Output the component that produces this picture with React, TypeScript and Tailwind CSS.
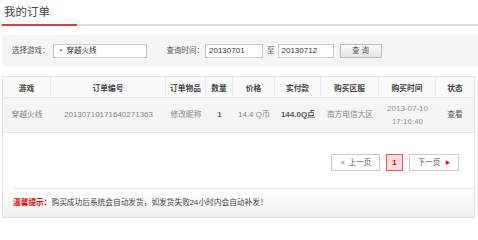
import React from "react";

const cjk = { fontFamily: '"Liberation Sans", "Noto Sans CJK SC", sans-serif' };

const cols = [
  { label: "游戏", w: "w-[48px]" },
  { label: "订单编号", w: "w-[115px]" },
  { label: "订单物品", w: "w-[40px]" },
  { label: "数量", w: "w-[27px]" },
  { label: "价格", w: "w-[42px]" },
  { label: "实付款", w: "w-[46px]" },
  { label: "购买区服", w: "w-[58px]" },
  { label: "购买时间", w: "w-[57px]" },
  { label: "状态", w: "flex-1" },
];

function SearchBar() {
  return (
    <div className="mt-[9px] ml-[2px] h-[31px] bg-[#f5f5f5] flex items-center pl-[10px] text-[7.5px] text-[#555]">
      <span>选择游戏：</span>
      <div className="ml-[3px] w-[94px] h-[14px] bg-white border border-[#ccc] flex items-center pl-[5px]">
        <span className="text-[5px] text-[#777]">▼</span>
        <span className="ml-[3px] text-[#333]">穿越火线</span>
      </div>
      <span className="ml-[20px]">查询时间：</span>
      <div className="ml-[1px] w-[58px] h-[14px] bg-white border border-[#ccc] flex items-center pl-[3px] text-[#333] text-[8px]">
        20130701
      </div>
      <span className="ml-[4px]">至</span>
      <div className="ml-[3px] w-[56px] h-[14px] bg-white border border-[#ccc] flex items-center pl-[3px] text-[#333] text-[8px]">
        20130712
      </div>
      <div className="ml-[6px] w-[42px] h-[14px] border border-[#bbb] bg-gradient-to-b from-[#fbfbfb] to-[#e6e6e6] flex items-center justify-center text-[#555]">
        查&nbsp;询
      </div>
    </div>
  );
}

function OrderTable() {
  const row = [
    { v: "穿越火线", c: "text-[#888]" },
    { v: "20130710171640271363", c: "text-[#888] text-[8px]" },
    { v: "修改昵称", c: "text-[#888]" },
    { v: "1", c: "text-[#666] font-bold text-[8px]" },
    { v: "14.4 Q币", c: "text-[#888] text-[8px]" },
    { v: "144.0Q点", c: "text-[#555] font-bold text-[8px]" },
    { v: "南方电信大区", c: "text-[#888]" },
    { v: "time", c: "text-[#999] text-[8px]" },
    { v: "查看", c: "text-[#555]" },
  ];
  return (
    <div className="text-[7.7px]">
      <div className="flex h-[21px] bg-[#fafafa] border-b border-[#e6e6e6]">
        {cols.map((c, i) => (
          <div
            key={c.label}
            className={`${c.w} flex items-center justify-center pt-[3px] font-bold text-[#444] ${
              i < cols.length - 1 ? "border-r border-[#ececec]" : ""
            }`}
          >
            {c.label}
          </div>
        ))}
      </div>
      <div className="flex h-[35px] bg-[#f5f5f5] border-b border-[#e6e6e6]">
        {cols.map((c, i) => (
          <div key={c.label} className={`${c.w} flex items-center justify-center ${row[i].c}`}>
            {row[i].v === "time" ? (
              <div className="flex flex-col items-center leading-[13px]">
                <span>2013-07-10</span>
                <span>17:16:40</span>
              </div>
            ) : (
              row[i].v
            )}
          </div>
        ))}
      </div>
    </div>
  );
}

function Pager() {
  return (
    <div className="mt-[21px] flex justify-end pr-[15px] text-[7.5px]">
      <div className="w-[49px] h-[17px] border border-[#ccc] bg-white flex items-center justify-center text-[#555]">
        <span className="text-[5px] text-[#bbb] mr-[4px]">◀</span>上一页
      </div>
      <div className="ml-[6px] w-[17px] h-[17px] border border-[#e55] bg-[#fcdcdc] flex items-center justify-center text-[#d00] font-bold text-[8px]">
        1
      </div>
      <div className="ml-[6px] w-[50px] h-[17px] border border-[#ccc] bg-white flex items-center justify-center text-[#555]">
        下一页<span className="text-[5px] text-[#e00] ml-[5px]">▶</span>
      </div>
    </div>
  );
}

export default function App() {
  return (
    <div className="w-[478px] h-[240px] bg-white overflow-hidden" style={cjk}>
      <div className="h-[24px] flex items-center pt-[2px] pl-[4px] text-[11.5px] text-[#444]">我的订单</div>
      <div className="flex h-[2px] ml-[2px]">
        <div className="w-[75px] bg-[#e4393c]" />
        <div className="flex-1 bg-[#dcdcdc]" />
      </div>
      <SearchBar />
      <div className="mt-[10px] ml-[2px] w-[473px] h-[142px] border border-[#e3e3e3] bg-gradient-to-b from-white from-80% to-[#f0f0f0] flex flex-col">
        <OrderTable />
        <Pager />
        <div className="mt-[17px] ml-[10px] border-t border-[#e8e8e8]" />
        <div className="mt-[8px] ml-[10px] text-[7.7px] text-[#444]">
          <span className="text-[#e00] font-bold">温馨提示：</span>
          购买成功后系统会自动发货，如发货失败24小时内会自动补发！
        </div>
      </div>
    </div>
  );
}
